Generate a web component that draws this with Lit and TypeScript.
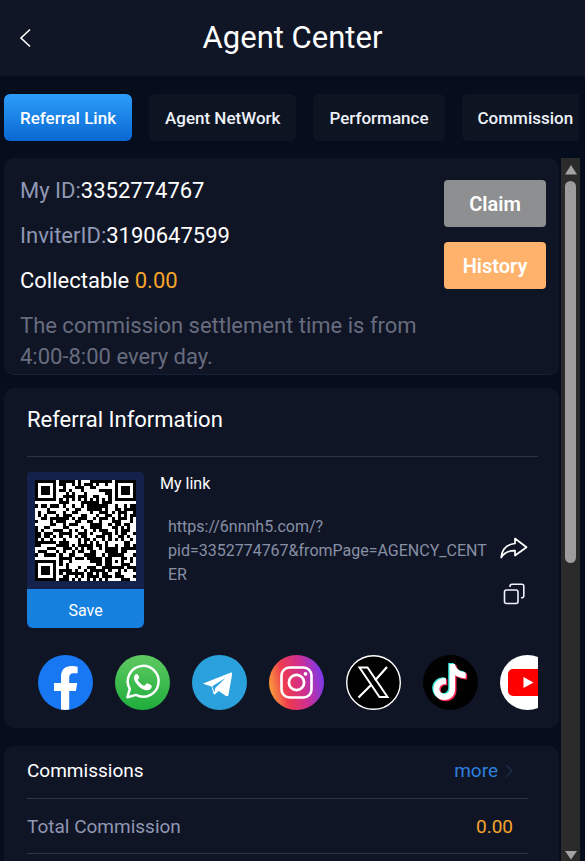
import { LitElement, html, css, svg } from "lit";
import { customElement, property } from "lit/decorators.js";

/* ---- QR code, version 4, error correction level M, byte mode ---- */
const SIZE = 33;
const BLOCKS = 2;
const DATA_PER_BLOCK = 32;
const ECC_PER_BLOCK = 18;

function gfMul(a: number, b: number): number {
  let r = 0;
  for (let i = 7; i >= 0; i--) {
    r = (r << 1) ^ ((r >>> 7) * 0x11d);
    r ^= ((b >>> i) & 1) * a;
  }
  return r;
}

function reedSolomon(data: number[], degree: number): number[] {
  const gen = new Array(degree).fill(0);
  gen[degree - 1] = 1;
  let root = 1;
  for (let i = 0; i < degree; i++) {
    for (let j = 0; j < degree; j++) {
      gen[j] = gfMul(gen[j], root);
      if (j + 1 < degree) gen[j] ^= gen[j + 1];
    }
    root = gfMul(root, 2);
  }
  const rem = new Array(degree).fill(0);
  for (const b of data) {
    const f = b ^ rem.shift();
    rem.push(0);
    gen.forEach((c, i) => (rem[i] ^= gfMul(c, f)));
  }
  return rem;
}

function codewords(text: string): number[] {
  const bits: number[] = [];
  const put = (v: number, n: number) => {
    for (let i = n - 1; i >= 0; i--) bits.push((v >>> i) & 1);
  };
  const total = BLOCKS * DATA_PER_BLOCK;
  put(4, 4);
  put(text.length, 8);
  for (const ch of text) put(ch.charCodeAt(0), 8);
  put(0, Math.min(4, total * 8 - bits.length));
  while (bits.length % 8) bits.push(0);
  for (let pad = 0xec; bits.length < total * 8; pad ^= 0xec ^ 0x11) put(pad, 8);
  const bytes: number[] = [];
  for (let i = 0; i < bits.length; i += 8) bytes.push(parseInt(bits.slice(i, i + 8).join(""), 2));
  const blocks = Array.from({ length: BLOCKS }, (_, i) =>
    bytes.slice(i * DATA_PER_BLOCK, (i + 1) * DATA_PER_BLOCK));
  const ecc = blocks.map((b) => reedSolomon(b, ECC_PER_BLOCK));
  const out: number[] = [];
  for (let i = 0; i < DATA_PER_BLOCK; i++) blocks.forEach((b) => out.push(b[i]));
  for (let i = 0; i < ECC_PER_BLOCK; i++) ecc.forEach((b) => out.push(b[i]));
  return out;
}

const MASKS: Array<(x: number, y: number) => boolean> = [
  (x, y) => (x + y) % 2 === 0,
  (_x, y) => y % 2 === 0,
  (x) => x % 3 === 0,
  (x, y) => (x + y) % 3 === 0,
];

function qrPath(text: string, mask: number): string {
  const m: boolean[][] = Array.from({ length: SIZE }, () => new Array(SIZE).fill(false));
  const fixed: boolean[][] = Array.from({ length: SIZE }, () => new Array(SIZE).fill(false));
  const set = (x: number, y: number, v: boolean) => {
    if (x < 0 || y < 0 || x >= SIZE || y >= SIZE) return;
    m[y][x] = v;
    fixed[y][x] = true;
  };
  for (let i = 0; i < SIZE; i++) {
    set(6, i, i % 2 === 0);
    set(i, 6, i % 2 === 0);
  }
  for (const [cx, cy] of [[3, 3], [SIZE - 4, 3], [3, SIZE - 4]])
    for (let dy = -4; dy <= 4; dy++)
      for (let dx = -4; dx <= 4; dx++) {
        const d = Math.max(Math.abs(dx), Math.abs(dy));
        set(cx + dx, cy + dy, d !== 2 && d !== 4);
      }
  for (let dy = -2; dy <= 2; dy++)
    for (let dx = -2; dx <= 2; dx++)
      set(26 + dx, 26 + dy, Math.max(Math.abs(dx), Math.abs(dy)) !== 1);

  let rem = mask;
  for (let i = 0; i < 10; i++) rem = (rem << 1) ^ ((rem >>> 9) * 0x537);
  const fmt = ((mask << 10) | rem) ^ 0x5412;
  const bit = (i: number) => ((fmt >>> i) & 1) === 1;
  for (let i = 0; i <= 5; i++) set(8, i, bit(i));
  set(8, 7, bit(6));
  set(8, 8, bit(7));
  set(7, 8, bit(8));
  for (let i = 9; i < 15; i++) set(14 - i, 8, bit(i));
  for (let i = 0; i < 8; i++) set(SIZE - 1 - i, 8, bit(i));
  for (let i = 8; i < 15; i++) set(8, SIZE - 15 + i, bit(i));
  set(8, SIZE - 8, true);

  const data = codewords(text);
  let k = 0;
  for (let right = SIZE - 1; right >= 1; right -= 2) {
    if (right === 6) right = 5;
    for (let v = 0; v < SIZE; v++)
      for (let j = 0; j < 2; j++) {
        const x = right - j;
        const y = ((right + 1) & 2) === 0 ? SIZE - 1 - v : v;
        if (fixed[y][x]) continue;
        const on = k < data.length * 8 && ((data[k >>> 3] >>> (7 - (k & 7))) & 1) === 1;
        k++;
        m[y][x] = on !== MASKS[mask](x, y);
      }
  }
  let d = "";
  m.forEach((row, y) => row.forEach((on, x) => { if (on) d += `M${x} ${y}h1v1h-1z`; }));
  return d;
}

@customElement("qr-code")
export class QrCode extends LitElement {
  @property() text = "";
  static styles = css`
    :host { display: block; background: #fff; }
    svg { display: block; width: 100%; height: auto; }
  `;
  render() {
    return html`<svg viewBox="0 0 33 33" shape-rendering="crispEdges" role="img" aria-label="QR code of my link">
      <path fill="#000" d=${qrPath(this.text, 3)}></path>
    </svg>`;
  }
}

/* ---- Social network badges, each on a 55 × 55 grid ---- */
const NOTE = "M26.500 9h5.600c.6 4.600 4.600 8 10.600 8.400v5.800c-4 0-7.600-1-10.600-3v13.500c0 7-4.900 11.300-10.900 11.300s-10.700-4.800-10.700-11c0-6.600 5.500-11.500 12.400-10.900v6.200c-3.600-.8-6.500 1.500-6.500 4.700 0 2.800 2.200 4.900 5 4.900 3.200 0 5.100-2.200 5.100-5.600z";

const socials = [
  { name: "Facebook", art: svg`
    <circle cx="27.500" cy="27.500" r="27.500" fill="#1877f2"></circle>
    <path fill="#fff" d="M23 54.600V36h-7v-8h7v-6.200c0-7 4-10.800 10.400-10.800 2.200 0 4.600.3 6.200.7v6.600h-3.900c-3.300 0-4.500 1.600-4.500 4.200V28h8l-1.300 8h-6.700v18.600a27 27 0 0 1-8.200 0z"></path>` },
  { name: "WhatsApp", art: svg`
    <defs><linearGradient id="wa" x1="0" y1="0" x2="0" y2="1"><stop offset="0" stop-color="#5fc961"></stop><stop offset="1" stop-color="#1fae3c"></stop></linearGradient></defs>
    <circle cx="27.500" cy="27.500" r="27.500" fill="url(#wa)"></circle>
    <path fill="none" stroke="#fff" stroke-width="2.500" stroke-linejoin="round" d="M12.500 42.200l2.300-8.300A15.400 15.400 0 1 1 21 39.900z"></path>
    <path fill="#fff" d="M21.600 18.900c-1 0-2.700 1.500-2.700 4.200 0 2.600 1.900 5.200 4.500 7.800 3 2.900 5.900 4.400 8.800 4.400 2.700 0 4.600-1.900 4.600-4.300 0-.7-4.300-2.700-4.900-2.700-.8 0-1.700 2.500-2.600 2.500-1.700 0-6-4-6.500-5.800-.2-.8 1.500-1.700 1.500-2.600 0-.7-1.500-3.500-2.700-3.500z"></path>` },
  { name: "Telegram", art: svg`
    <circle cx="27.500" cy="27.500" r="27.500" fill="#2aa1dc"></circle>
    <path fill="#fff" d="M11.800 28.200l26.600-10.500c1.200-.4 2 .3 1.700 1.700L36.500 39.800c-.4 1.500-1.300 1.800-2.500 1.100l-7.300-5-3.400 3.200c-.9.8-1.600.5-1.800-.7l-1.900-7-7.700-2.300c-.8-.2-.8-.6-.1-.9z"></path>
    <path fill="#2aa1dc" d="M20.300 31.300l13.200-8.400-10.200 10-.8 4.600z"></path>` },
  { name: "Instagram", art: svg`
    <defs><linearGradient id="ig" x1="0" y1=".6" x2="1" y2=".4"><stop offset="0" stop-color="#fba03a"></stop><stop offset=".28" stop-color="#ee3b50"></stop><stop offset=".62" stop-color="#cf2e92"></stop><stop offset="1" stop-color="#7a3bee"></stop></linearGradient></defs>
    <circle cx="27.500" cy="27.500" r="27.500" fill="url(#ig)"></circle>
    <rect x="12.500" y="12.500" width="30" height="30" rx="8" fill="none" stroke="#fff" stroke-width="2.600"></rect>
    <circle cx="27.500" cy="27.500" r="7.600" fill="none" stroke="#fff" stroke-width="2.800"></circle>
    <circle cx="36.500" cy="18.800" r="1.900" fill="#fff"></circle>` },
  { name: "X", art: svg`
    <circle cx="27.500" cy="27.500" r="26.800" fill="#000" stroke="#fff" stroke-width="1.400"></circle>
    <path fill="none" stroke="#fff" stroke-width="2" d="M13.500 12.500h8l20 29.500h-8z"></path>
    <path fill="none" stroke="#fff" stroke-width="2.200" d="M41 12L29 25.600M25.600 29.500L12.500 42.500"></path>` },
  { name: "TikTok", art: svg`
    <circle cx="27.500" cy="27.500" r="27.500" fill="#010101"></circle>
    <path transform="translate(-1.300 -.9)" fill="#2ee6d6" d=${NOTE}></path>
    <path transform="translate(1.400 1.200)" fill="#fb2c55" d=${NOTE}></path>
    <path fill="#fff" d=${NOTE}></path>` },
  { name: "YouTube", art: svg`
    <circle cx="27.500" cy="27.500" r="27.500" fill="#fff"></circle>
    <rect x="8" y="14" width="39" height="27" rx="5" fill="#f00"></rect>
    <path fill="#fff" d="M23.500 22v11l10-5.500z"></path>` },
];

const LINK = "https://6nnnh5.com/?pid=3352774767&fromPage=AGENCY_CENTER";

@customElement("app-root")
export class AppRoot extends LitElement {
  static styles = css`
    :host {
      display: flex;
      flex-direction: column;
      height: 100vh;
      overflow: hidden;
      background: #060d1c;
      color: #fff;
      font-family: Roboto, "Liberation Sans", sans-serif;
    }
    * { box-sizing: border-box; }
    h1, h2, p { margin: 0; font-weight: 400; }
    button { font-family: inherit; color: inherit; border: 0; padding: 0; background: none; cursor: pointer; }
    svg { display: block; }
    a { text-decoration: none; }

    header {
      flex: none;
      display: grid;
      grid-template-columns: 50px 1fr 50px;
      align-items: center;
      height: 76px;
      background: #101625;
    }
    .back { display: grid; place-items: center; height: 48px; }
    h1 { text-align: center; font-size: 31px; line-height: 40px; }

    .tabs {
      flex: none;
      display: flex;
      gap: 17px;
      margin: 18px 6px 17px 4px;
      overflow: hidden;
    }
    .tab {
      flex: none;
      height: 47px;
      padding: 0 16px;
      border-radius: 6px;
      background: #0d1422;
      color: #eef1f8;
      font-size: 17px;
      font-weight: 500;
    }
    .tab.active { background: linear-gradient(#2c9dfa, #0a68d2); color: #fff; }

    .body { flex: 1; min-height: 0; display: flex; padding-right: 5px; }
    main {
      flex: 1;
      min-width: 0;
      display: flex;
      flex-direction: column;
      gap: 13px;
      padding-left: 4px;
      overflow-y: auto;
      scrollbar-width: none;
    }
    .bar {
      flex: none;
      display: flex;
      flex-direction: column;
      align-items: center;
      gap: 6px;
      width: 19px;
      padding: 7px 0 1px;
      background: #2b2b2b;
    }
    .thumb { width: 11px; height: 55%; border-radius: 6px; background: #9c9c9c; }
    .down { margin-top: auto; }

    .card { flex: none; margin-right: 2px; border-radius: 10px; background: #101526; }

    .account { display: flex; justify-content: space-between; padding: 17px 13px 2px 16px; border-bottom: 1px solid #17213a; }
    .facts { flex: 1; max-width: 416px; font-size: 22px; }
    .facts p { line-height: 32px; margin-bottom: 13px; }
    .facts .note { line-height: 31px; margin: 0; color: #676c7e; }
    .key { color: #8f97b2; }
    .gold { color: #f5a42c; }
    .actions { display: flex; flex-direction: column; gap: 15px; padding-top: 5px; }
    .action { width: 102px; height: 47px; border-radius: 4px; font-size: 20px; font-weight: 600; }
    .claim { background: #8e8f90; }
    .history { background: #ffb26b; }

    .referral { padding: 0 21px 18px 23px; }
    .referral h2 { font-size: 22px; line-height: 32px; padding: 16px 0 20px; border-bottom: 1px solid #2c3344; }
    .link { display: grid; grid-template-columns: 117px 1fr 49px; padding-top: 15px; }
    .qr { border-radius: 4px; background: #14214a; overflow: hidden; }
    .code { margin: 8px; }
    .save { display: block; width: 100%; height: 39px; padding-top: 3px; border-radius: 0 0 6px 6px; background: #1680de; font-size: 16px; }
    .url { padding-left: 16px; font-size: 16px; line-height: 24px; }
    .url a { display: block; padding: 19px 0 0 8px; color: #8790a4; overflow-wrap: anywhere; }
    .url .title { display: block; }
    .tools { display: flex; flex-direction: column; align-items: center; gap: 20px; padding-top: 63px; }
    .tool { display: grid; place-items: center; width: 28px; height: 26px; }
    .socials { display: flex; gap: 22px; padding: 27px 0 0 11px; overflow: hidden; }
    .social { flex: none; display: block; width: 55px; height: 55px; }

    .commissions { margin-top: 5px; padding: 0 31px 40px 23px; }
    .row { display: flex; justify-content: space-between; align-items: center; height: 55px; border-bottom: 1px solid #2f3547; padding-right: 15px; font-size: 19px; }
    .head { height: 53px; padding: 0 14px 3px 0; }
    .head h2 { font-size: 19px; }
    .more { display: flex; align-items: center; gap: 6px; color: #2e7fdc; }
  `;

  render() {
    return html`
      <header>
        <button class="back" aria-label="Back">
          <svg width="12" height="20" viewBox="0 0 12 20" fill="none" stroke="#fff" stroke-width="1.600"><path d="M11 1.500L2 10l9 8.500"></path></svg>
        </button>
        <h1>Agent Center</h1>
      </header>

      <nav class="tabs">
        ${["Referral Link", "Agent NetWork", "Performance", "Commission"].map(
          (t, i) => html`<button class="tab ${i === 0 ? "active" : ""}">${t}</button>`)}
      </nav>

      <div class="body">
        <main>
          <section class="card account">
            <div class="facts">
              <p><span class="key">My ID:</span>3352774767</p>
              <p><span class="key">InviterID:</span>3190647599</p>
              <p>Collectable <span class="gold">0.00</span></p>
              <p class="note">The commission settlement time is from 4:00-8:00 every day.</p>
            </div>
            <div class="actions">
              <button class="action claim">Claim</button>
              <button class="action history">History</button>
            </div>
          </section>

          <section class="card referral">
            <h2>Referral Information</h2>
            <div class="link">
              <div class="qr">
                <qr-code class="code" .text=${LINK}></qr-code>
                <button class="save">Save</button>
              </div>
              <div class="url">
                <span class="title">My link</span>
                <a href=${LINK}>${LINK}</a>
              </div>
              <div class="tools">
                <button class="tool" aria-label="Share">
                  <svg width="28" height="22" viewBox="0 0 28 22" fill="none" stroke="#fff" stroke-width="1.700" stroke-linejoin="round"><path d="M15 1.500l11.500 8.700L15 18.500v-4.800C9 13.500 4.500 15.500 1.200 20.500 2 12.500 6.500 7.300 15 6.500z"></path></svg>
                </button>
                <button class="tool" aria-label="Copy">
                  <svg width="22" height="22" viewBox="0 0 22 22" fill="none" stroke="#eef1ff" stroke-width="1.600"><rect x="1.500" y="7" width="13.500" height="13.500" rx="2"></rect><path d="M7 4V3.200A2 2 0 0 1 9 1.200h9.800a2 2 0 0 1 2 2v9.600a2 2 0 0 1-2 2H18"></path></svg>
                </button>
              </div>
            </div>
            <div class="socials">
              ${socials.map((s) => html`<a class="social" href="#" aria-label=${s.name}><svg width="55" height="55" viewBox="0 0 55 55">${s.art}</svg></a>`)}
            </div>
          </section>

          <section class="card commissions">
            <div class="row head">
              <h2>Commissions</h2>
              <a class="more" href="#">more
                <svg width="10" height="14" viewBox="0 0 10 14" fill="none" stroke="#1c2b48" stroke-width="1.400"><path d="M2 1l6 6-6 6"></path></svg>
              </a>
            </div>
            <div class="row"><span class="key">Total Commission</span><span class="gold">0.00</span></div>
          </section>
        </main>
        <div class="bar" aria-hidden="true">
          <svg width="12" height="10" viewBox="0 0 12 10"><path fill="#a3a3a3" d="M6 0l6 9.500H0z"></path></svg>
          <div class="thumb"></div>
          <svg class="down" width="12" height="10" viewBox="0 0 12 10"><path fill="#a3a3a3" d="M6 9.500L12 1H0z"></path></svg>
        </div>
      </div>
    `;
  }
}
